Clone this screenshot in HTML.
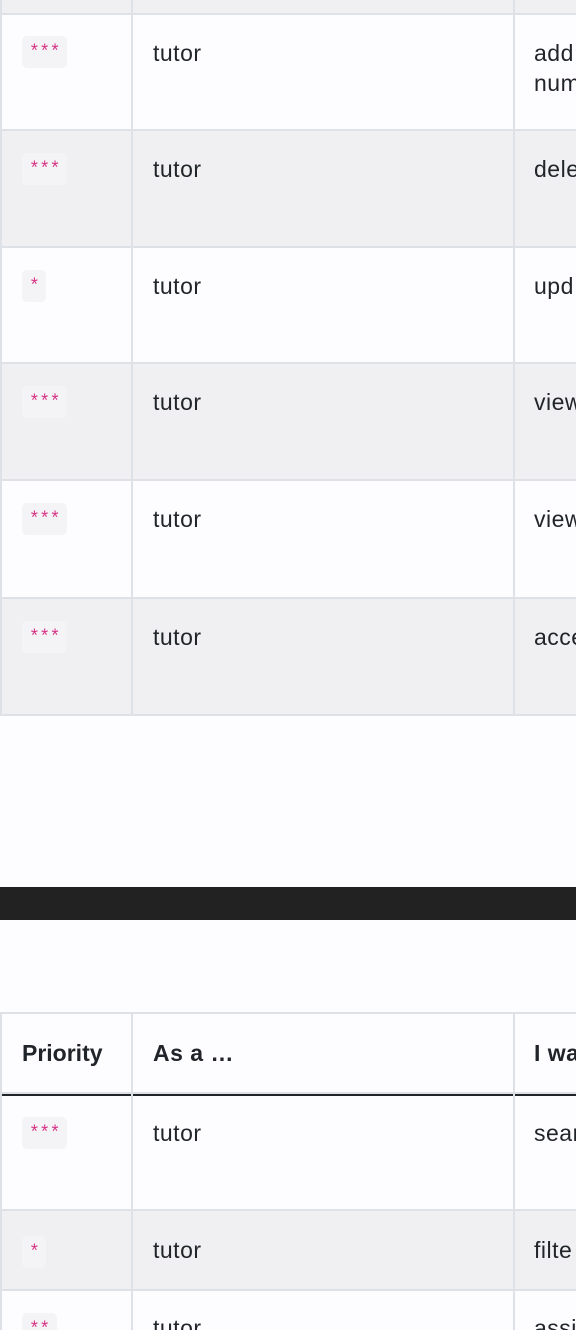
<!DOCTYPE html>
<html><head><meta charset="utf-8"><style>
*{margin:0;padding:0;box-sizing:border-box}
html,body{width:576px;height:1330px;overflow:hidden}
body{background:#fdfdff;position:relative;font-family:"Liberation Sans",sans-serif;color:#212529}
.r{position:absolute;left:0;width:576px}
.g{background:#f0f0f2}
.w{background:#fdfdff}
.h{position:absolute;left:0;width:576px;height:2px;background:#dee2e6}
.v{position:absolute;width:2px;background:#dee2e6}
.t{position:absolute;font-size:23px;line-height:30px;letter-spacing:0.5px;white-space:nowrap}
.c{position:absolute;left:22px;height:32px;background:#f4f4f7;border-radius:5px;color:#d63384;font-family:"Liberation Mono",monospace;font-size:18px;line-height:34px;padding:0 7px;letter-spacing:-0.5px}
</style></head><body>
<div class="r g" style="top:0;height:13px"></div>
<div class="h" style="top:13px"></div>
<div class="r w" style="top:15px;height:114px"></div>
<div class="h" style="top:129px"></div>
<div class="r g" style="top:131px;height:115px"></div>
<div class="h" style="top:246px"></div>
<div class="r w" style="top:248px;height:114px"></div>
<div class="h" style="top:362px"></div>
<div class="r g" style="top:364px;height:115px"></div>
<div class="h" style="top:479px"></div>
<div class="r w" style="top:481px;height:116px"></div>
<div class="h" style="top:597px"></div>
<div class="r g" style="top:599px;height:115px"></div>
<div class="h" style="top:714px"></div>
<div class="v" style="left:0;top:0;height:716px"></div>
<div class="v" style="left:131px;top:0;height:716px"></div>
<div class="v" style="left:513px;top:0;height:716px"></div>

<div class="c" style="top:36px">***</div><div class="t" style="left:153px;top:38px">tutor</div><div class="t" style="left:534px;top:38px">add<br>num</div>
<div class="c" style="top:153px">***</div><div class="t" style="left:153px;top:154px">tutor</div><div class="t" style="left:534px;top:154px">dele</div>
<div class="c" style="top:270px">*</div><div class="t" style="left:153px;top:271px">tutor</div><div class="t" style="left:534px;top:271px">upd</div>
<div class="c" style="top:386px">***</div><div class="t" style="left:153px;top:387px">tutor</div><div class="t" style="left:534px;top:387px">view</div>
<div class="c" style="top:503px">***</div><div class="t" style="left:153px;top:504px">tutor</div><div class="t" style="left:534px;top:504px">view</div>
<div class="c" style="top:621px">***</div><div class="t" style="left:153px;top:622px">tutor</div><div class="t" style="left:534px;top:622px">acce</div>

<div class="r" style="top:887px;height:33px;background:#222"></div>

<div class="h" style="top:1012px"></div>
<div class="r w" style="top:1014px;height:79px"></div>
<div class="h" style="top:1092px"></div>
<div class="r" style="top:1094px;height:2px;background:#212529"></div>
<div class="r w" style="top:1096px;height:113px"></div>
<div class="h" style="top:1209px"></div>
<div class="r g" style="top:1211px;height:78px"></div>
<div class="h" style="top:1289px"></div>
<div class="r w" style="top:1291px;height:39px"></div>
<div class="v" style="left:0;top:1012px;height:318px"></div>
<div class="v" style="left:131px;top:1012px;height:318px"></div>
<div class="v" style="left:513px;top:1012px;height:318px"></div>

<div class="t" style="left:22px;top:1038px;font-weight:bold;letter-spacing:0">Priority</div>
<div class="t" style="left:153px;top:1038px;font-weight:bold">As a …</div>
<div class="t" style="left:534px;top:1038px;font-weight:bold">I wa</div>
<div class="c" style="top:1117px">***</div><div class="t" style="left:153px;top:1118px">tutor</div><div class="t" style="left:534px;top:1118px">sear</div>
<div class="c" style="top:1236px">*</div><div class="t" style="left:153px;top:1235px">tutor</div><div class="t" style="left:534px;top:1235px">filte</div>
<div class="c" style="top:1313px">**</div><div class="t" style="left:153px;top:1313px">tutor</div><div class="t" style="left:534px;top:1313px">assi</div>
</body></html>
